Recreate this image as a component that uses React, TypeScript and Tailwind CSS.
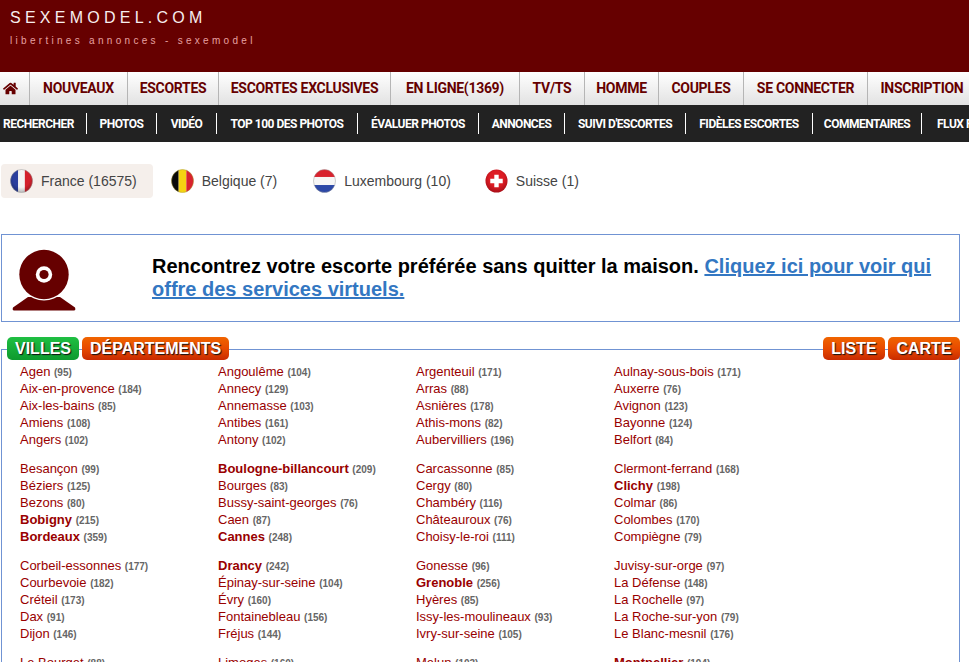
import { FaHome } from 'react-icons/fa'

const mainNav = [
  { label: 'NOUVEAUX', w: 'w-[98px]' },
  { label: 'ESCORTES', w: 'w-[91px]' },
  { label: 'ESCORTES EXCLUSIVES', w: 'w-[172px]' },
  { label: 'EN LIGNE(1369)', w: 'w-[129px]' },
  { label: 'TV/TS', w: 'w-[65px]' },
  { label: 'HOMME', w: 'w-[74px]' },
  { label: 'COUPLES', w: 'w-[85px]' },
  { label: 'SE CONNECTER', w: 'w-[124px]' },
  { label: 'INSCRIPTION', w: 'w-[108px]' },
]

const subNav = [
  { label: 'RECHERCHER', w: 'w-[87px] justify-start pl-[3px]' },
  { label: 'PHOTOS', w: 'w-[70px] justify-center' },
  { label: 'VIDÉO', w: 'w-[60px] justify-center' },
  { label: 'TOP 100 DES PHOTOS', w: 'w-[141px] justify-center' },
  { label: 'ÉVALUER PHOTOS', w: 'w-[121px] justify-center' },
  { label: 'ANNONCES', w: 'w-[86px] justify-center' },
  { label: "SUIVI D'ESCORTES", w: 'w-[121px] justify-center' },
  { label: 'FIDÈLES ESCORTES', w: 'w-[127px] justify-center' },
  { label: 'COMMENTAIRES', w: 'w-[109px] justify-center' },
]

type City = [string, number, boolean?]

const cityRows: City[][][] = [
  [
    [['Agen', 95], ['Aix-en-provence', 184], ['Aix-les-bains', 85], ['Amiens', 108], ['Angers', 102]],
    [['Angoulême', 104], ['Annecy', 129], ['Annemasse', 103], ['Antibes', 161], ['Antony', 102]],
    [['Argenteuil', 171], ['Arras', 88], ['Asnières', 178], ['Athis-mons', 82], ['Aubervilliers', 196]],
    [['Aulnay-sous-bois', 171], ['Auxerre', 76], ['Avignon', 123], ['Bayonne', 124], ['Belfort', 84]],
  ],
  [
    [['Besançon', 99], ['Béziers', 125], ['Bezons', 80], ['Bobigny', 215, true], ['Bordeaux', 359, true]],
    [['Boulogne-billancourt', 209, true], ['Bourges', 83], ['Bussy-saint-georges', 76], ['Caen', 87], ['Cannes', 248, true]],
    [['Carcassonne', 85], ['Cergy', 80], ['Chambéry', 116], ['Châteauroux', 76], ['Choisy-le-roi', 111]],
    [['Clermont-ferrand', 168], ['Clichy', 198, true], ['Colmar', 86], ['Colombes', 170], ['Compiègne', 79]],
  ],
  [
    [['Corbeil-essonnes', 177], ['Courbevoie', 182], ['Créteil', 173], ['Dax', 91], ['Dijon', 146]],
    [['Drancy', 242, true], ['Épinay-sur-seine', 104], ['Évry', 160], ['Fontainebleau', 156], ['Fréjus', 144]],
    [['Gonesse', 96], ['Grenoble', 256, true], ['Hyères', 85], ['Issy-les-moulineaux', 93], ['Ivry-sur-seine', 105]],
    [['Juvisy-sur-orge', 97], ['La Défense', 148], ['La Rochelle', 97], ['La Roche-sur-yon', 79], ['Le Blanc-mesnil', 176]],
  ],
  [
    [['Le Bourget', 88]],
    [['Limoges', 160]],
    [['Melun', 103]],
    [['Montpellier', 194, true]],
  ],
]

function FlagFrance() {
  return (
    <svg width="23" height="24" viewBox="0 0 24 25">
      <defs>
        <clipPath id="clip-fr"><ellipse cx="12" cy="12.5" rx="11.5" ry="12" /></clipPath>
        <radialGradient id="shade-fr" cx="50%" cy="40%" r="60%">
          <stop offset="60%" stopColor="#000" stopOpacity="0" />
          <stop offset="100%" stopColor="#000" stopOpacity="0.28" />
        </radialGradient>
      </defs>
      <g clipPath="url(#clip-fr)">
        <rect width="8.5" height="25" fill="#2b3f9e" />
        <rect x="8.5" width="7" height="25" fill="#f4f4f4" />
        <rect x="15.5" width="8.5" height="25" fill="#d3202c" />
        <rect width="24" height="25" fill="url(#shade-fr)" />
      </g>
      <ellipse cx="12" cy="12.5" rx="11.5" ry="12" fill="none" stroke="#999" strokeWidth="0.5" />
    </svg>
  )
}

function FlagBelgium() {
  return (
    <svg width="23" height="24" viewBox="0 0 24 25">
      <defs>
        <clipPath id="clip-be"><ellipse cx="12" cy="12.5" rx="11.5" ry="12" /></clipPath>
      </defs>
      <g clipPath="url(#clip-be)">
        <rect width="8" height="25" fill="#0a0a0a" />
        <rect x="8" width="8" height="25" fill="#f5d312" />
        <rect x="16" width="8" height="25" fill="#d8222e" />
      </g>
      <ellipse cx="12" cy="12.5" rx="11.5" ry="12" fill="none" stroke="#a89a2a" strokeWidth="0.5" />
    </svg>
  )
}

function FlagLuxembourg() {
  return (
    <svg width="23" height="24" viewBox="0 0 24 25">
      <defs>
        <clipPath id="clip-lu"><ellipse cx="12" cy="12.5" rx="11.5" ry="12" /></clipPath>
      </defs>
      <g clipPath="url(#clip-lu)">
        <rect width="24" height="8.3" fill="#d8222e" />
        <rect y="8.3" width="24" height="8.4" fill="#f6f6f6" />
        <rect y="16.7" width="24" height="8.3" fill="#2c48a6" />
      </g>
      <ellipse cx="12" cy="12.5" rx="11.5" ry="12" fill="none" stroke="#999" strokeWidth="0.5" />
    </svg>
  )
}

function FlagSwiss() {
  return (
    <svg width="23" height="24" viewBox="0 0 24 25">
      <defs>
        <radialGradient id="shade-ch" cx="50%" cy="40%" r="60%">
          <stop offset="55%" stopColor="#dd1c24" />
          <stop offset="100%" stopColor="#a90f18" />
        </radialGradient>
      </defs>
      <ellipse cx="12" cy="12.5" rx="11.5" ry="12" fill="url(#shade-ch)" />
      <path d="M9.7 6h4.6v4.2h4.2v4.6h-4.2V19H9.7v-4.2H5.5v-4.6h4.2z" fill="#fff" />
    </svg>
  )
}

const countries = [
  { name: 'France (16575)', flag: <FlagFrance />, box: 'pr-[16px] bg-[#f5efeb]' },
  { name: 'Belgique (7)', flag: <FlagBelgium />, box: 'pr-[18px]' },
  { name: 'Luxembourg (10)', flag: <FlagLuxembourg />, box: 'pr-[16px]' },
  { name: 'Suisse (1)', flag: <FlagSwiss />, box: 'pr-[16px]' },
]

function Webcam() {
  return (
    <svg width="64" height="62" viewBox="0 0 64 62" className="mt-[3px] shrink-0">
      <path d="M2 61.5Q0 61.5 1 58.5L16 48H48L63 58.5Q64 61.5 62 61.5Z" fill="#660000" />
      <circle cx="32" cy="25.5" r="26" fill="#fff" />
      <circle cx="32" cy="25.5" r="24.7" fill="#660000" />
      <circle cx="32" cy="25.5" r="8.2" fill="#fff" />
      <circle cx="32" cy="25.5" r="4.6" fill="#660000" />
    </svg>
  )
}

function TabButton({ label, green, extra }: { label: string; green?: boolean; extra?: string }) {
  return (
    <a
      href="#"
      className={`flex h-[23px] items-center justify-center rounded-[5px] px-[8px] text-[16px] font-bold leading-none text-white [text-shadow:1px_1px_1px_#111] ${
        green ? 'bg-gradient-to-b from-[#1fbf42] to-[#0d9a2e]' : 'bg-gradient-to-b from-[#f06400] via-[#e84a00] to-[#c92a00]'
      } ${extra ?? ''}`}
    >
      {label}
    </a>
  )
}

export default function App() {
  return (
    <div className="h-[662px] overflow-hidden bg-white font-['Liberation_Sans',Arial,sans-serif]">
      {/* Header */}
      <header className="h-[72px] bg-[#660000] pl-[10px] pt-[8px]">
        <div className="text-[16px] leading-[20px] tracking-[4.25px] text-[#f7eeee]">SEXEMODEL.COM</div>
        <div className="mt-[6px] text-[10px] leading-[14px] tracking-[3.3px] text-[#e6a0a0]">libertines annonces - sexemodel</div>
      </header>

      {/* Main nav */}
      <nav className="flex h-[33px] overflow-hidden bg-gradient-to-b from-white to-[#e2e2e2] font-['Roboto',sans-serif] text-[14px] font-bold tracking-[-0.3px] text-[#660000]">
        <a href="#" className="flex w-[30px] shrink-0 items-center border-r border-[#b5b5b5] pl-[3px] text-[15px]">
          <FaHome />
        </a>
        {mainNav.map((item) => (
          <a key={item.label} href="#" className={`flex shrink-0 items-center justify-center border-r border-[#b5b5b5] whitespace-nowrap last:border-r-0 ${item.w}`}>
            {item.label}
          </a>
        ))}
      </nav>

      {/* Sub nav */}
      <nav className="flex h-[37px] items-center overflow-hidden bg-[#222222] font-['Roboto',sans-serif] text-[12px] font-bold tracking-[-0.5px] text-white">
        {subNav.map((item) => (
          <a key={item.label} href="#" className={`flex h-[21px] shrink-0 items-center border-r border-white whitespace-nowrap ${item.w}`}>
            {item.label}
          </a>
        ))}
        <a href="#" className="ml-[15px] shrink-0 whitespace-nowrap">FLUX RSS</a>
      </nav>

      {/* Countries */}
      <div className="ml-px mt-[22px] flex gap-[9px] text-[14px] text-[#444]">
        {countries.map((c) => (
          <a
            key={c.name}
            href="#"
            className={`flex h-[34px] items-center gap-[8px] rounded-[4px] pl-[9px] ${c.box}`}
          >
            {c.flag}
            {c.name}
          </a>
        ))}
      </div>

      {/* Banner */}
      <div className="ml-px mr-[9px] mt-[36px] flex h-[88px] items-center border border-[#7093d3] pl-[10px]">
        <Webcam />
        <p className="ml-[76px] w-[790px] text-[20px] font-bold leading-[23px] text-black">
          Rencontrez votre escorte préférée sans quitter la maison.{' '}
          <a href="#" className="text-[#3377c2] underline">Cliquez ici pour voir qui offre des services virtuels.</a>
        </p>
      </div>

      {/* Cities */}
      <div className="ml-px mr-[9px] mt-[27px] border border-[#7093d3]">
        <div className="-mt-[13px] ml-[5px] -mr-px flex items-start justify-between">
          <div className="flex gap-[3px]">
            <TabButton label="VILLES" green />
            <TabButton label="DÉPARTEMENTS" />
          </div>
          <div className="flex gap-[3px]">
            <TabButton label="LISTE" extra="w-[62px]" />
            <TabButton label="CARTE" extra="w-[72px]" />
          </div>
        </div>
        <div className="pl-[18px] pt-[3px]">
          {cityRows.map((row, i) => (
            <div key={i} className="mb-[12px] flex">
              {row.map((col, j) => (
                <ul key={j} className="w-[198px] shrink-0 text-[13px] leading-[17px] text-[#990000]">
                  {col.map(([name, count, strong]) => (
                    <li key={name} className="h-[17px] whitespace-nowrap">
                      <a href="#" className={strong ? 'font-bold' : ''}>{name}</a>{' '}
                      <span className="text-[10px] font-bold leading-none text-[#666]">({count})</span>
                    </li>
                  ))}
                </ul>
              ))}
            </div>
          ))}
        </div>
      </div>
    </div>
  )
}
